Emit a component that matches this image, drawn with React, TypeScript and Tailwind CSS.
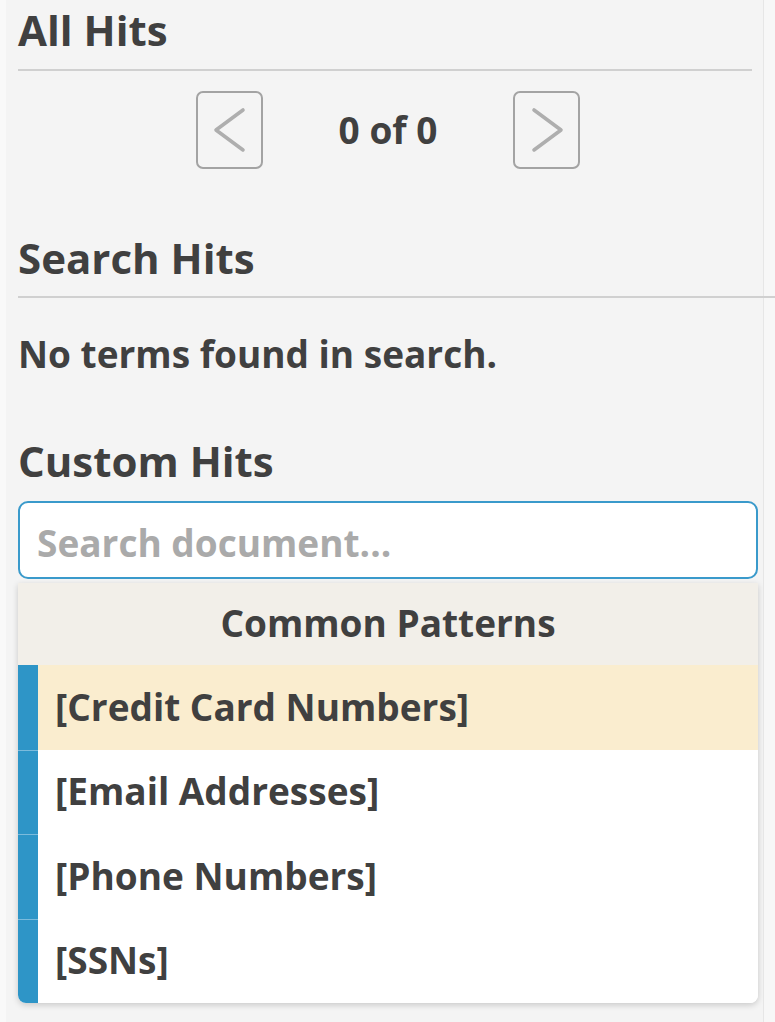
import React from "react";

const font = { fontFamily: '"Open Sans", "Liberation Sans", sans-serif' };

function Chevron({ dir }: { dir: "left" | "right" }) {
  return (
    <svg width="67" height="78" viewBox="0 0 67 78" className="absolute -inset-[2px]">
      {dir === "left" ? (
        <polyline points="47,19 20,39 47,59" fill="none" stroke="#aeaeae" strokeWidth="3.6" strokeLinecap="round" strokeLinejoin="round" />
      ) : (
        <polyline points="21,19 48,39 21,59" fill="none" stroke="#aeaeae" strokeWidth="3.6" strokeLinecap="round" strokeLinejoin="round" />
      )}
    </svg>
  );
}

function NavButton({ dir }: { dir: "left" | "right" }) {
  return (
    <div className="relative w-[67px] h-[78px] rounded-[7px] border-2 border-[#a3a3a3]">
      <Chevron dir={dir} />
    </div>
  );
}

const items = ["[Credit Card Numbers]", "[Email Addresses]", "[Phone Numbers]", "[SSNs]"];

export default function App() {
  return (
    <div className="w-[775px] h-[1022px] bg-[#f4f4f4] flex overflow-hidden text-[#404040]" style={font}>
      <div className="w-[6px] shrink-0 bg-[#f9f9f9]" />
      <div className="flex-1 flex flex-col pl-[12px] pr-[5px]">
        <div className="mt-[4px] text-[42px] leading-[52px] font-bold">All Hits</div>
        <div className="mt-[13px] h-[2px] bg-[#d0d0d0] mr-[6px]" />
        <div className="mt-[20px] flex items-center">
          <div className="ml-[178px]">
            <NavButton dir="left" />
          </div>
          <div className="w-[250px] text-center text-[37px] font-bold">0 of 0</div>
          <NavButton dir="right" />
        </div>
        <div className="mt-[63px] text-[42px] leading-[52px] font-bold">Search Hits</div>
        <div className="relative z-10 mt-[12px] h-[2px] bg-[#d0d0d0] -mr-[17px]" />
        <div className="mt-[30px] text-[37px] leading-[52px] font-bold">No terms found in search.</div>
        <div className="mt-[55px] text-[42px] leading-[52px] font-bold">Custom Hits</div>
        <div className="mt-[14px] h-[78px] rounded-[10px] border-2 border-[#3a9acb] bg-white flex items-center pl-[17px] pt-[6px] text-[37px] font-bold text-[#aaaaaa]">
          Search document...
        </div>
        <div className="mt-[4px] rounded-b-[8px] bg-white shadow-[0_2px_6px_rgba(0,0,0,0.18)] overflow-hidden">
          <div className="h-[82px] bg-[#f2efe9] flex items-center justify-center pb-[3px] text-[37px] font-bold">
            Common Patterns
          </div>
          {items.map((t, i) => (
            <div key={t} className={`flex h-[84.5px] ${i === 0 ? "bg-[#faedcf]" : "bg-white"}`}>
              <div className={`w-[20px] shrink-0 bg-[#2e95c7] ${i > 0 ? "border-t border-[#7cbbdc]" : ""}`} />
              <div className="flex items-center pl-[17px] pb-[2px] text-[37px] font-bold">{t}</div>
            </div>
          ))}
        </div>
      </div>
      <div className="w-[12px] shrink-0 bg-[#f7f7f7] border-l border-[#e6e6e6]" />
    </div>
  );
}
